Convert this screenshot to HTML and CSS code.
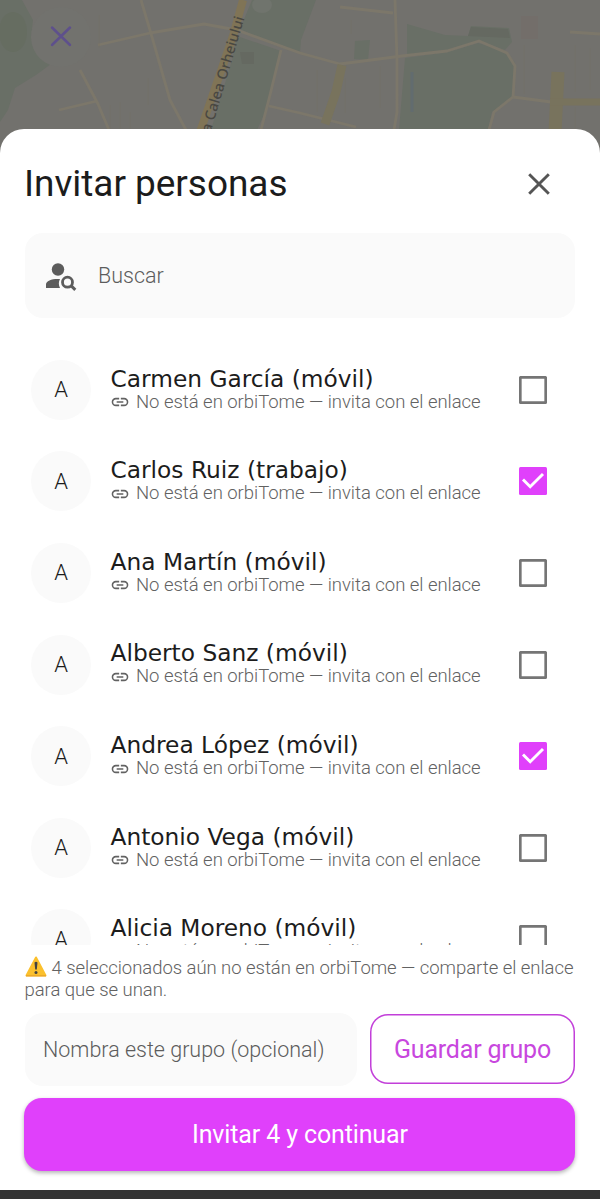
FILE: index.html
```
<!DOCTYPE html>
<html lang="es">
<head>
<meta charset="utf-8">
<title>Invitar personas</title>
<link rel="stylesheet" href="styles.css">
</head>
<body>
<svg class="defs" width="0" height="0" aria-hidden="true">
  <symbol id="link" viewBox="0 0 24 24"><path d="M3.9 12c0-1.71 1.39-3.1 3.1-3.1h4V7H7a5 5 0 0 0 0 10h4v-1.900H7A3.100 3.100 0 0 1 3.900 12zM8 13h8v-2H8v2zm9-6h-4v1.900h4a3.100 3.100 0 0 1 0 6.200h-4V17h4a5 5 0 0 0 0-10z"/></symbol>
  <symbol id="box" viewBox="0 0 28 28"><rect x="1.3" y="1.3" width="25.4" height="25.4" rx=".6" fill="none" stroke="#757575" stroke-width="2.7"/></symbol>
  <symbol id="checked" viewBox="0 0 28 28"><rect width="28" height="28" rx="1.5" fill="#e040fb"/><path d="M4 12.500l7.200 7.200L24 7" fill="none" stroke="#fff" stroke-width="2.9"/></symbol>
</svg>
<div class="screen">
  <div class="map">
    <svg width="600" height="160" viewBox="0 0 600 160">
      <rect width="600" height="160" fill="#72716d"/>
      <g class="terrain">
      <g fill="#696f66">
        <path d="M0 0H22L33 20L31 38L42 56L51 64L36 75L15 88L8 110L0 122Z"/>
        <path d="M252 0H316L301 40L300 53L272 44L240 29Z"/>
        <path d="M237 36L281 51L264 115L257 130H211L232 60Z"/>
        <path d="M407 24L445 35L468 36L471 26L509 28L512 42L505 50L480 41L448 52L407 57Z"/>
        <path d="M405 58L448 52L478 43L505 51L515 63L513 97L492 112L488 130H399Z"/>
        <path d="M355 41L370 40L368 60L354 59Z"/>
      </g>
      <ellipse cx="13" cy="32" rx="14" ry="20" fill="#666d61"/>
      <path d="M240 52h14v12h-12zM468 36L471 27L508 29L510 38Z" fill="#656961"/>
      <path d="M521 16h17v23h-17z" fill="#736e6a"/>
      <ellipse cx="262" cy="5" rx="10" ry="8" fill="#70746d"/>
      <g fill="none" stroke="#7c776a" stroke-width="2.800" stroke-linejoin="round">
        <path d="M141 0L152 37L170 100L186 130M98 45L150 33L204 24L237 30L300 53L340 64L402 56L447 51L479 41L507 53L515 66L513 97L551 102"/>
        <path d="M395 0L397 60L397 112L394 130M513 97L494 112L489 130M80 70L98 104L109 130M59 110L97 101M281 50L270 95L261 130M269 106L300 113L356 127M340 7L393 13M570 32L600 34"/>
      </g>
      <g stroke="#777165" stroke-width="1" opacity=".5">
        <path d="M99 15V48M110 105V130M120 102V130M130 112V130M148 78V105M317 70V112M345 78V113M380 66V108M524 45V94M575 45V92M590 48V90M575 107V129M351 20V34"/>
      </g>
      <path d="M243 0L233 36L200 132" fill="none" stroke="#807456" stroke-width="8"/>
      <g fill="none" stroke="#78735d" stroke-width="9">
        <path d="M342 65L336 92L325 124"/>
        <path d="M558 72L555 132" stroke-width="13"/>
        <path d="M550 102H600" stroke-width="7"/>
      </g>
      <path d="M412 72V112" stroke="#626c6f" stroke-width="3"/>
      <circle cx="61" cy="37" r="30" fill="#72726e"/>
      </g>
      <path d="M52 27.500L70 45M70 27.500L52 45" stroke="#5e508c" stroke-width="2.500" stroke-linecap="round"/>
      <text class="road" transform="translate(210.500 133) rotate(-73.500)" textLength="120">a Calea Orheiului</text>
    </svg>
  </div>

  <main class="sheet">
    <header class="head">
      <h1 class="title">Invitar personas</h1>
      <svg class="close" width="22" height="22" viewBox="0 0 22 22"><path d="M1.200 1.200L20.800 20.800M20.800 1.200L1.200 20.800" stroke="#555" stroke-width="2.900"/></svg>
    </header>
    <div class="search">
      <svg class="person" width="32" height="28" viewBox="0 0 32 28" fill="#5c5c5c"><circle cx="13" cy="6.500" r="6.200"/><path d="M1 25V21.500C1 17.500 7.500 15.500 15 16C13.400 19 13.500 22 15 25Z"/><circle cx="22.500" cy="19.200" r="5" fill="none" stroke="#5c5c5c" stroke-width="2.800"/><path d="M26 22.700L30.300 26.800" stroke="#5c5c5c" stroke-width="3"/></svg>
      <span class="search-text">Buscar</span>
    </div>

    <ul class="list">
      <li class="row"><span class="avatar">A</span><div class="info"><span class="name">Carmen García (móvil)</span><span class="sub"><svg class="link"><use href="#link"/></svg><span>No está en orbiTome — invita con el enlace</span></span></div><svg class="check"><use href="#box"/></svg></li>
      <li class="row"><span class="avatar">A</span><div class="info"><span class="name">Carlos Ruiz (trabajo)</span><span class="sub"><svg class="link"><use href="#link"/></svg><span>No está en orbiTome — invita con el enlace</span></span></div><svg class="check"><use href="#checked"/></svg></li>
      <li class="row"><span class="avatar">A</span><div class="info"><span class="name">Ana Martín (móvil)</span><span class="sub"><svg class="link"><use href="#link"/></svg><span>No está en orbiTome — invita con el enlace</span></span></div><svg class="check"><use href="#box"/></svg></li>
      <li class="row"><span class="avatar">A</span><div class="info"><span class="name">Alberto Sanz (móvil)</span><span class="sub"><svg class="link"><use href="#link"/></svg><span>No está en orbiTome — invita con el enlace</span></span></div><svg class="check"><use href="#box"/></svg></li>
      <li class="row"><span class="avatar">A</span><div class="info"><span class="name">Andrea López (móvil)</span><span class="sub"><svg class="link"><use href="#link"/></svg><span>No está en orbiTome — invita con el enlace</span></span></div><svg class="check"><use href="#checked"/></svg></li>
      <li class="row"><span class="avatar">A</span><div class="info"><span class="name">Antonio Vega (móvil)</span><span class="sub"><svg class="link"><use href="#link"/></svg><span>No está en orbiTome — invita con el enlace</span></span></div><svg class="check"><use href="#box"/></svg></li>
      <li class="row"><span class="avatar">A</span><div class="info"><span class="name">Alicia Moreno (móvil)</span><span class="sub"><svg class="link"><use href="#link"/></svg><span>No está en orbiTome — invita con el enlace</span></span></div><svg class="check"><use href="#box"/></svg></li>
    </ul>

    <p class="notice"><svg class="warn" width="22" height="21" viewBox="0 0 22 21"><path d="M11 1.500L20.500 19.500H1.500Z" fill="#fbc02d" stroke="#fbc02d" stroke-width="2" stroke-linejoin="round"/><path d="M1 19.800H21" stroke="#e9a32a" stroke-width="1.200"/><path d="M9.500 6.500Q11 5 12.500 6.500L11.800 13.500H10.200Z" fill="#424242"/><circle cx="11" cy="16.500" r="1.500" fill="#424242"/></svg>4 seleccionados aún no están en orbiTome — comparte el enlace<br>para que se unan.</p>

    <div class="group">
      <div class="field"><span>Nombra este grupo (opcional)</span></div>
      <button class="save">Guardar grupo</button>
    </div>
    <button class="invite">Invitar 4 y continuar</button>
  </main>
  <div class="navbar"></div>
</div>
</body>
</html>
```
FILE: styles.css
```
* { box-sizing: border-box; }
body { margin: 0; font-family: Roboto, sans-serif; background: #73726e; color: #1c1c1c; }
.defs { display: block; }
.screen { display: flex; flex-direction: column; width: 600px; height: 1199px; overflow: hidden; }
.map { height: 129px; flex: none; }
.map svg { display: block; }
.terrain { filter: blur(.6px); }
.road { font: 500 14.500px "Noto Sans", sans-serif; fill: #494842; }
.sheet { flex: none; height: 1061px; display: flex; flex-direction: column; padding: 0 25px; background: #fff; border-radius: 24px 24px 0 0; }
.head { display: flex; align-items: center; justify-content: space-between; height: 104px; padding: 6px 25px 0 0; }
.title { margin: 0 0 0 -1px; font-size: 37px; font-weight: 400; line-height: 44px; letter-spacing: -.04px; white-space: nowrap; }
.search { display: flex; align-items: center; gap: 21px; height: 85px; padding-left: 20px; border-radius: 18px; background: #fafafa; }
.person { margin-top: 2px; }
.search-text { font-size: 21.500px; font-weight: 300; color: #5c5c5c; }
.list { list-style: none; margin: 25.800px 0 0; padding: 0; height: 601.200px; overflow: hidden; }
.row { display: flex; align-items: center; height: 91.650px; padding: 0 28px 0 6px; }
.avatar { display: flex; align-items: center; justify-content: center; width: 60px; height: 60px; border-radius: 50%; background: #fafafa; font-size: 22px; font-weight: 300; }
.info { flex: 1; display: flex; flex-direction: column; padding: 0 0 2.200px 19.500px; white-space: nowrap; }
.name { font: 23.300px/27px "DejaVu Sans", sans-serif; }
.sub { display: flex; align-items: center; gap: 6px; font-size: 18.500px; font-weight: 300; line-height: 21px; letter-spacing: -.03px; color: #626262; }
.link { width: 20px; height: 20px; margin-left: -.5px; fill: #626262; }
.check { width: 28px; height: 28px; flex: none; }
.notice { margin: 11px 0 0 -.5px; height: 57px; font-size: 18.500px; font-weight: 300; line-height: 22px; letter-spacing: -.04px; color: #626262; white-space: nowrap; }
.warn { vertical-align: -3px; margin-right: 5px; }
.group { display: flex; align-items: center; gap: 13px; height: 73px; }
.field { display: flex; align-items: center; width: 332px; height: 73px; padding-left: 18px; border-radius: 18px; background: #fafafa; font-size: 21.500px; font-weight: 300; color: #5c5c5c; white-space: nowrap; }
.save { width: 205px; height: 70px; padding: 0; border: 0; border-radius: 18px; background: #fff; box-shadow: inset 0 0 0 1.500px #c23fd9; color: #c847de; font: 400 25px Roboto, sans-serif; letter-spacing: -.2px; white-space: nowrap; }
.invite { flex: none; width: 551px; height: 73px; margin: 12.500px 0 0 -.6px; padding: 0; border: 0; border-radius: 18px; background: #e040fb; color: #fff; font: 400 25px Roboto, sans-serif; letter-spacing: -.13px; box-shadow: 0 2px 4px rgba(0, 0, 0, .3); }
.navbar { height: 9px; flex: none; background: #333; }
```
